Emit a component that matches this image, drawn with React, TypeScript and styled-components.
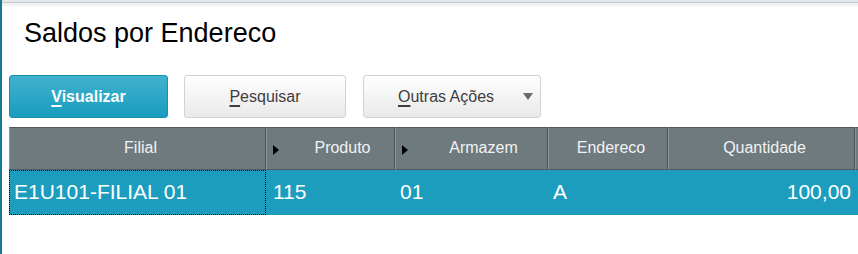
import React from "react";
import styled, { createGlobalStyle } from "styled-components";

const Global = createGlobalStyle`
  html, body { margin: 0; padding: 0; background: #ffffff; }
  body { font-family: "Liberation Sans", Arial, sans-serif; }
  #root { width: 858px; height: 254px; overflow: hidden; }
`;

const Page = styled.div`
  box-sizing: border-box;
  width: 858px;
  height: 254px;
  border-left: 2px solid #17798d;
  display: flex;
  flex-direction: column;
  overflow: hidden;
  background: #ffffff;
`;

const TopStrip = styled.div`
  height: 6px;
  flex: none;
  background: linear-gradient(
    to bottom,
    #e3e7ea 0 2px,
    #c5ccd1 2px 3px,
    #eef0f1 3px 6px
  );
`;

const Title = styled.h1`
  margin: 0;
  padding: 11px 0 0 22px;
  height: 32px;
  line-height: 32px;
  font-size: 27px;
  font-weight: normal;
  color: #000;
  font-family: "Liberation Sans", Arial, sans-serif;
`;

const Toolbar = styled.div`
  display: flex;
  align-items: center;
  margin-top: 26px;
  padding-left: 7px;
`;

const Button = styled.button<{ $primary?: boolean; $w: number; $gap?: number }>`
  box-sizing: border-box;
  width: ${(p) => p.$w}px;
  height: 43px;
  margin-right: ${(p) => p.$gap ?? 0}px;
  border-radius: 3px;
  font-family: "Liberation Sans", Arial, sans-serif;
  font-size: 16px;
  display: flex;
  align-items: center;
  justify-content: center;
  cursor: pointer;
  padding: 0;
  border: 1px solid ${(p) => (p.$primary ? "#1990ae" : "#d2d2d2")};
  background: ${(p) =>
    p.$primary
      ? "linear-gradient(to bottom, #40b1cd, #1a9cc0)"
      : "linear-gradient(to bottom, #ffffff, #e9e9e9)"};
  color: ${(p) => (p.$primary ? "#ffffff" : "#3e3e3e")};
  font-weight: ${(p) => (p.$primary ? "bold" : "normal")};
`;

const DropButton = styled(Button)`
  justify-content: flex-start;
  padding: 0 6px 0 34px;
`;

const Mnemonic = styled.span`
  text-decoration: underline;
  text-decoration-thickness: 2px;
  text-underline-offset: 3px;
`;

const DropArrow = styled.span`
  margin-left: auto;
  width: 0;
  height: 0;
  border-left: 5px solid transparent;
  border-right: 5px solid transparent;
  border-top: 7px solid #6a6a6a;
  margin-right: 1px;
`;

const Grid = styled.div`
  margin-top: 9px;
  margin-left: 7px;
  display: grid;
  grid-template-columns: 257px 129px 153px 120px 187px 60px;
  grid-template-rows: 43px 45px;
  width: 906px;
`;

const HeadCell = styled.div`
  box-sizing: border-box;
  background: #6e7a7e;
  border-top: 1px solid #50585b;
  border-bottom: 1px solid #50585b;
  border-right: 1px solid #4c5457;
  border-left: 1px solid #8b9598;
  color: #f2f2f2;
  font-size: 16px;
  display: flex;
  align-items: center;
  padding-left: 6px;
`;

const HeadText = styled.span<{ $offset?: number }>`
  flex: 1;
  text-align: center;
  padding-left: ${(p) => p.$offset ?? 0}px;
  padding-bottom: 2px;
`;

const SortMark = styled.span`
  width: 0;
  height: 0;
  border-top: 5px solid transparent;
  border-bottom: 5px solid transparent;
  border-left: 6px solid #000;
  margin-top: 3px;
`;

const RowCell = styled.div<{ $focused?: boolean; $right?: boolean; $pad?: number }>`
  box-sizing: border-box;
  background: #1d9dbd;
  color: #ffffff;
  font-size: 21px;
  display: flex;
  align-items: center;
  justify-content: ${(p) => (p.$right ? "flex-end" : "flex-start")};
  padding: 0 ${(p) => (p.$right ? "4px" : "0")} 1px
    ${(p) => (p.$right ? 0 : p.$pad ?? 5)}px;
  outline: ${(p) => (p.$focused ? "1px dotted #000" : "none")};
  outline-offset: -1px;
`;

const FocusCell = styled(RowCell)`
  border-left: 1px solid #1d9dbd;
`;

export default function App() {
  return (
    <>
      <Global />
      <Page>
        <TopStrip />
        <Title>Saldos por Endereco</Title>
        <Toolbar>
          <Button $primary $w={159} $gap={16}>
            <span>
              <Mnemonic>V</Mnemonic>isualizar
            </span>
          </Button>
          <Button $w={162} $gap={17}>
            <span>
              <Mnemonic>P</Mnemonic>esquisar
            </span>
          </Button>
          <DropButton $w={178}>
            <span>
              <Mnemonic>O</Mnemonic>utras Ações
            </span>
            <DropArrow />
          </DropButton>
        </Toolbar>
        <Grid>
          <HeadCell>
            <HeadText>Filial</HeadText>
          </HeadCell>
          <HeadCell>
            <SortMark />
            <HeadText $offset={12}>Produto</HeadText>
          </HeadCell>
          <HeadCell>
            <SortMark />
            <HeadText $offset={12}>Armazem</HeadText>
          </HeadCell>
          <HeadCell>
            <HeadText>Endereco</HeadText>
          </HeadCell>
          <HeadCell>
            <HeadText>Quantidade</HeadText>
          </HeadCell>
          <HeadCell />
          <FocusCell $focused $pad={4}>E1U101-FILIAL 01</FocusCell>
          <RowCell $pad={7}>115</RowCell>
          <RowCell>01</RowCell>
          <RowCell>A</RowCell>
          <RowCell $right>100,00</RowCell>
          <RowCell />
        </Grid>
      </Page>
    </>
  );
}
